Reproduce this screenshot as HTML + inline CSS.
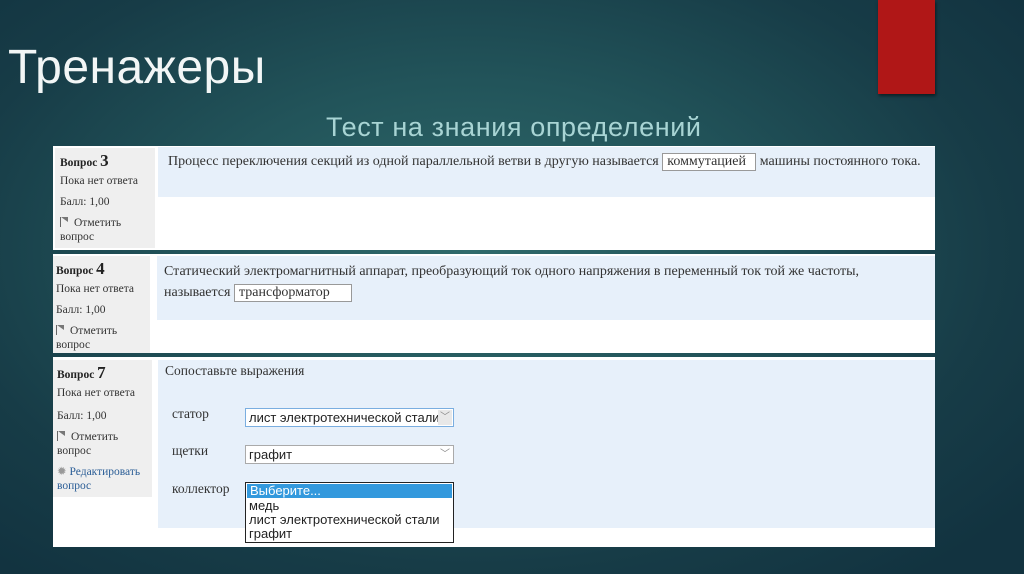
<!DOCTYPE html>
<html><head><meta charset="utf-8"><style>
*{margin:0;padding:0;box-sizing:border-box}
body{width:1024px;height:574px;overflow:hidden;position:relative;font-family:"Liberation Serif","DejaVu Serif",serif;
background:radial-gradient(ellipse 700px 420px at 470px 250px,#2f6a6b 0%,#22545a 40%,#173c47 75%,#123340 100%);}
.abs{position:absolute}
.red{left:878px;top:0;width:57px;height:94px;background:#b01717;box-shadow:1px 2px 3px rgba(0,0,0,.5)}
.t1{left:8px;top:40px;font:48px "Liberation Sans",sans-serif;color:#f2f6f6;letter-spacing:0.5px}
.t2{left:326px;top:112px;font:27px "Liberation Sans",sans-serif;color:#a8d4d4;letter-spacing:.6px}
.panel{background:#fff}
.side{background:#efefef;font-size:11.5px;color:#333;padding:6px 5px;line-height:14px}
.side b{font-size:11.5px;color:#222}
.side b span{font-size:17px}
.side p{margin-top:7px}
.blue{background:#e7f0fa;font-size:14px;color:#333}
.inp{display:inline-block;border:1px solid #999;background:#fff;padding:0 4px;height:18px;line-height:16px;vertical-align:middle}
.sel{position:absolute;background:#fff;border:1px solid #aaa;font:13px "Liberation Sans",sans-serif;color:#222;padding:1px 3px;height:19px;width:209px;overflow:hidden;white-space:nowrap}
.sel i{position:absolute;right:1px;top:1px;width:14px;height:15px;font-style:normal;color:#888;font-size:10px;text-align:center;line-height:15px}
.flag{display:inline-block;width:10px;height:10px;border-left:1.5px solid #666;margin-right:4px;position:relative;vertical-align:-1px}
.flag:after{content:"";position:absolute;left:0;top:0;border-left:7px solid transparent;border-top:5px solid #777}
</style></head><body>
<div class="abs red"></div>
<div class="abs t1">Тренажеры</div>
<div class="abs t2">Тест на знания определений</div>

<div class="abs panel" style="left:53px;top:146px;width:882px;height:104px"></div>
<div class="abs side" style="left:55px;top:148px;width:100px;height:100px"><b>Вопрос <span>3</span></b><p style="margin-top:4px">Пока нет ответа</p><p>Балл: 1,00</p><p><span class="flag"></span>Отметить<br>вопрос</p></div>
<div class="abs blue" style="left:158px;top:147px;width:777px;height:50px;padding:5px 10px;line-height:20px;white-space:nowrap">Процесс переключения секций из одной параллельной ветви в другую называется <span class="inp" style="width:94px">коммутацией</span> машины постоянного тока.</div>

<div class="abs panel" style="left:53px;top:254px;width:882px;height:99px"></div>
<div class="abs side" style="left:53px;top:256px;width:97px;height:97px;padding-left:3px"><b>Вопрос <span>4</span></b><p style="margin-top:4px">Пока нет ответа</p><p>Балл: 1,00</p><p><span class="flag"></span>Отметить<br>вопрос</p></div>
<div class="abs blue" style="left:157px;top:256px;width:778px;height:64px;padding:5px 7px;line-height:21px;white-space:nowrap">Статический электромагнитный аппарат, преобразующий ток одного напряжения в переменный ток той же частоты,<br>называется <span class="inp" style="width:118px">трансформатор</span></div>

<div class="abs panel" style="left:53px;top:357px;width:882px;height:190px"></div>
<div class="abs side" style="left:53px;top:360px;width:99px;height:137px;padding-left:4px"><b>Вопрос <span>7</span></b><p style="margin-top:4px">Пока нет ответа</p><p style="margin-top:9px">Балл: 1,00</p><p><span class="flag"></span>Отметить<br>вопрос</p><p style="color:#2a5d96"><span style="color:#999">✹</span> Редактировать<br>вопрос</p></div>
<div class="abs blue" style="left:158px;top:360px;width:777px;height:168px"></div>
<div class="abs" style="left:165px;top:363px;font-size:13.5px;color:#333">Сопоставьте выражения</div>
<div class="abs" style="left:172px;top:406px;font-size:13.5px;color:#333">статор</div>
<div class="abs" style="left:172px;top:443px;font-size:13.5px;color:#333">щетки</div>
<div class="abs" style="left:172px;top:481px;font-size:13.5px;color:#333">коллектор</div>
<div class="sel" style="left:245px;top:408px;border-color:#7aaee0">лист электротехнической стали<i style="background:#e8e8e8">﹀</i></div>
<div class="sel" style="left:245px;top:445px">графит<i>﹀</i></div>
<div class="abs" style="left:245px;top:482px;width:209px;height:61px;border:1px solid #222;background:#fff;font:13px/14px 'Liberation Sans',sans-serif;color:#222">
<div style="background:#3399dd;color:#fff;padding-left:3px;margin:1px">Выберите...</div>
<div style="padding-left:3px">медь</div>
<div style="padding-left:3px">лист электротехнической стали</div>
<div style="padding-left:3px">графит</div>
</div>
</body></html>
